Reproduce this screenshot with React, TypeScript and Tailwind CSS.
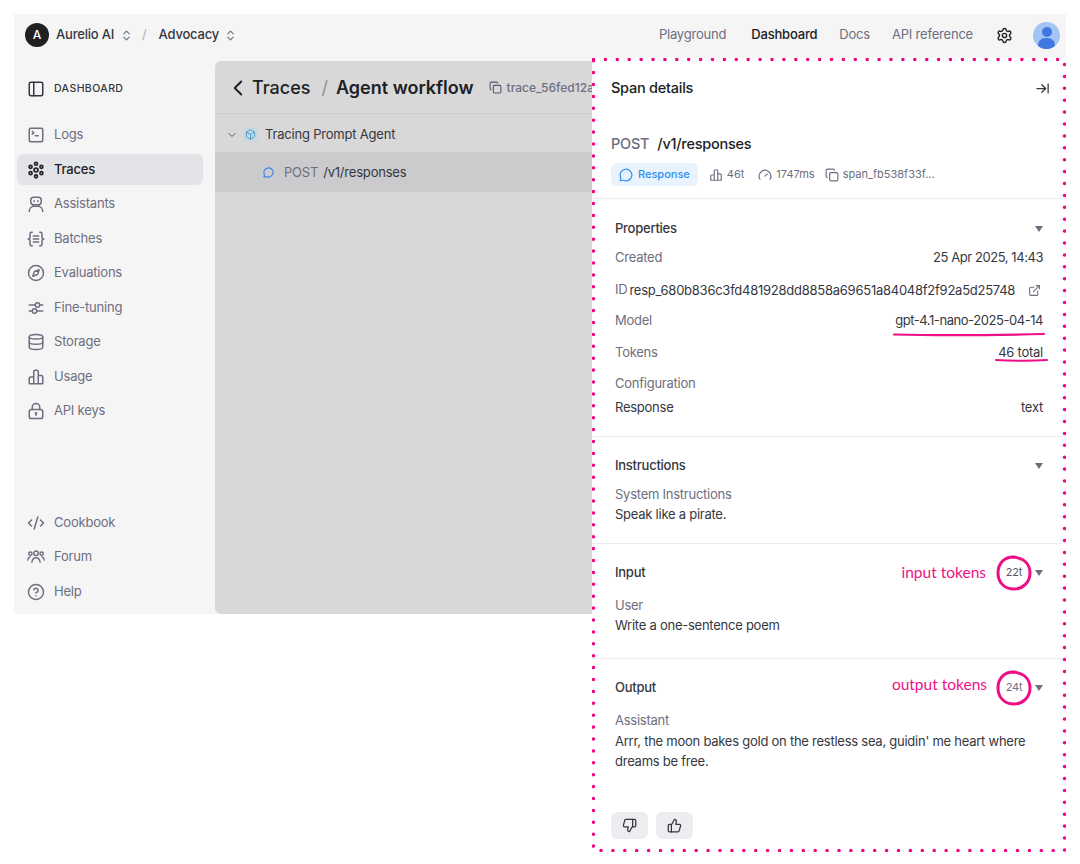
import React from "react";
import {
  ArrowRightToLine, Box, ChevronDown, ChevronLeft, ChevronsUpDown, CircleHelp, CodeXml, Compass, Copy,
  Database, ExternalLink, Gauge, MessageCircle, PanelLeft, Settings, SquareTerminal, ThumbsDown, ThumbsUp,
} from "lucide-react";

type IconProps = { className?: string };
const base = { viewBox: "0 0 24 24", fill: "none", stroke: "currentColor", strokeWidth: 2, strokeLinecap: "round" as const, strokeLinejoin: "round" as const };

const TracesIcon = ({ className }: IconProps) => (
  <svg {...base} className={className} strokeWidth={2.2}>
    <circle cx="12" cy="12" r="2.6" /><circle cx="12" cy="3.6" r="2" /><circle cx="12" cy="20.4" r="2" />
    <circle cx="4.8" cy="7.8" r="2" /><circle cx="19.2" cy="7.8" r="2" /><circle cx="4.8" cy="16.2" r="2" /><circle cx="19.2" cy="16.2" r="2" />
  </svg>
);
const BotIcon = ({ className }: IconProps) => (
  <svg {...base} className={className}>
    <rect x="5" y="3" width="14" height="10" rx="4" />
    <path d="M9.5 7.5v1M14.5 7.5v1M8 13v2M16 13v2M3 22c0-4 3-6.5 5-7h8c2 .5 5 3 5 7" />
  </svg>
);
const BracesIcon = ({ className }: IconProps) => (
  <svg {...base} className={className}>
    <path d="M7 3H6a2 2 0 0 0-2 2v4.5C4 11 3 12 1.500 12 3 12 4 13 4 14.500V19a2 2 0 0 0 2 2h1" />
    <path d="M17 3h1a2 2 0 0 1 2 2v4.500c0 1.500 1 2.500 2.500 2.500-1.500 0-2.500 1-2.500 2.500V19a2 2 0 0 1-2 2h-1" />
    <path d="M8.500 8h7M8.500 12h7M8.500 16h7" />
  </svg>
);
const TuneIcon = ({ className }: IconProps) => (
  <svg {...base} className={className}>
    <path d="M3 8h8M17 8h4M3 16h4M13 16h8" /><circle cx="14" cy="8" r="3" /><circle cx="10" cy="16" r="3" />
  </svg>
);
const BarsIcon = ({ className }: IconProps) => (
  <svg {...base} className={className}>
    <path d="M3 21v-7a2 2 0 0 1 2-2h4V5a2 2 0 0 1 2-2h2a2 2 0 0 1 2 2v5h4a2 2 0 0 1 2 2v9zM9 12v9M15 10v11" />
  </svg>
);
const LockIcon = ({ className }: IconProps) => (
  <svg {...base} className={className}>
    <rect x="3" y="10" width="18" height="12" rx="2.500" />
    <path d="M7 10V7a5 5 0 0 1 10 0v3M12 15.500v2" /><circle cx="12" cy="15" r=".8" />
  </svg>
);
const UsersIcon = ({ className }: IconProps) => (
  <svg {...base} className={className} strokeWidth={1.9}>
    <circle cx="12" cy="7" r="3" /><circle cx="4.500" cy="7.500" r="2.200" /><circle cx="19.500" cy="7.500" r="2.200" />
    <path d="M6.500 19c.5-4 2.500-6 5.500-6s5 2 5.500 6M1 16c.3-2 1.300-3.500 3-4M23 16c-.3-2-1.300-3.500-3-4" />
  </svg>
);

const NavItem = ({ icon: Icon, label, active }: { icon: React.ComponentType<IconProps>; label: string; active?: boolean }) => (
  <div className={`flex h-[31px] items-center gap-[9px] rounded-md pl-[10px] text-[13px] tracking-[-0.2px] ${active ? "bg-[#e3e4e8] font-medium text-[#202123]" : "text-[#6e6e80]"}`}>
    <Icon className="size-[18px] shrink-0" />
    <span>{label}</span>
  </div>
);

const Row = ({ label, value, strong, tight }: { label: string; value: string; strong?: boolean; tight?: boolean }) => (
  <div className="flex items-center justify-between text-[13px]">
    <span className={strong ? "text-[#353740]" : "text-[#6e6e80]"}>{label}</span>
    <span className={`text-[#353740] ${tight ? "tracking-[-0.44px]" : ""}`}>{value}</span>
  </div>
);

const Caret = ({ className = "" }: IconProps) => (
  <span className={`h-0 w-0 shrink-0 border-x-[4.500px] border-t-[6px] border-x-transparent border-t-[#6e6e80] ${className}`} />
);

const Ring = ({ className }: IconProps) => (
  <svg viewBox="0 0 36 36" className={`absolute ${className}`} fill="none" stroke="#ee0f86" strokeWidth="3">
    <path d="M19 2C9 1 2 8 2 18s7 16 16 16 16-7 16-16S28 3 17 2" />
  </svg>
);

export default function App() {
  return (
    <div className="relative h-[864px] w-[1080px] overflow-hidden bg-white pl-[14px] pt-[14px] font-['Inter',sans-serif]">
      <div className="flex h-[600px] w-[1052px] flex-col bg-[#f5f5f5]">
        <header className="flex h-[47px] shrink-0 items-center pb-[6px] pl-[11px] pr-[6px] pt-[1px] text-[13px] tracking-[-0.2px]">
          <span className="flex size-6 items-center justify-center rounded-full bg-[#202123] text-[12px] font-medium text-white">A</span>
          <span className="ml-[7px] font-medium text-[#353740]">Aurelio AI</span>
          <ChevronsUpDown className="ml-[6px] size-[13px] text-[#6e6e80]" />
          <span className="ml-[9px] text-[#acacbe]">/</span>
          <span className="ml-[12px] font-medium text-[#353740]">Advocacy</span>
          <ChevronsUpDown className="ml-[5px] size-[13px] text-[#6e6e80]" />
          <nav className="ml-auto flex items-center text-[#6e6e80]">
            <span>Playground</span>
            <span className="ml-[25px] font-medium text-[#202123]">Dashboard</span>
            <span className="ml-[22px]">Docs</span>
            <span className="ml-[22px]">API reference</span>
            <Settings className="ml-[23px] size-[17px] text-[#202123]" />
            <span className="relative ml-[20px] size-[27px] overflow-hidden rounded-full bg-[#a3c4f5]">
              <span className="absolute left-[8.500px] top-[5px] size-[10px] rounded-full bg-[#3f78de]" />
              <span className="absolute left-[5px] top-[16px] h-[14px] w-[17px] rounded-full bg-[#3f78de]" />
            </span>
          </nav>
        </header>
        <div className="flex min-h-0 flex-1">
          <aside className="flex w-[201px] shrink-0 flex-col justify-between pb-[7px] pl-[3px] pr-[12px]">
            <div>
              <div className="flex h-[56px] items-center gap-[9px] pl-[10px] text-[10.500px] font-medium uppercase tracking-[0.04em] text-[#353740]">
                <PanelLeft className="size-[18px] text-[#353740]" />
                <span>Dashboard</span>
              </div>
              <div className="mt-[2.500px] flex flex-col gap-[3.500px]">
                <NavItem icon={SquareTerminal} label="Logs" />
                <NavItem icon={TracesIcon} label="Traces" active />
                <NavItem icon={BotIcon} label="Assistants" />
                <NavItem icon={BracesIcon} label="Batches" />
                <NavItem icon={Compass} label="Evaluations" />
                <NavItem icon={TuneIcon} label="Fine-tuning" />
                <NavItem icon={Database} label="Storage" />
                <NavItem icon={BarsIcon} label="Usage" />
                <NavItem icon={LockIcon} label="API keys" />
              </div>
            </div>
            <div className="flex flex-col gap-[3.500px]">
              <NavItem icon={CodeXml} label="Cookbook" />
              <NavItem icon={UsersIcon} label="Forum" />
              <NavItem icon={CircleHelp} label="Help" />
            </div>
          </aside>
          <main className="min-w-0 flex-1 rounded-l-[6px] bg-[#d8d8d8]">
            <div className="flex h-[53px] items-center border-b border-[#cfcfcf] pl-[10px] pt-[1px] text-[#202123]">
              <ChevronLeft className="size-[26px]" strokeWidth={1.800} />
              <span className="ml-[1px] text-[18px] font-medium">Traces</span>
              <span className="ml-[11px] text-[18px] text-[#8e8ea0]">/</span>
              <span className="ml-[8px] text-[18px] font-semibold">Agent workflow</span>
              <Copy className="ml-[15px] size-[13px] text-[#565869]" />
              <span className="ml-[5px] whitespace-nowrap text-[12px] font-medium text-[#6e6e80]">trace_56fed12a</span>
            </div>
            <div className="flex h-[38px] items-center pl-[11px] pt-[3px] text-[13px] tracking-[-0.2px] text-[#353740]">
              <ChevronDown className="size-[12px] text-[#565869]" />
              <span className="ml-[5px] flex size-[15px] items-center justify-center rounded-[4px] bg-[#c8d8e0]">
                <Box className="size-[11px] text-[#3c9bc8]" />
              </span>
              <span className="ml-[7px]">Tracing Prompt Agent</span>
            </div>
            <div className="flex h-[40px] items-center bg-[#cbcbcd] pl-[48px] pt-[1px] text-[13px] tracking-[-0.2px] text-[#353740]">
              <MessageCircle className="size-[11px] text-[#3b82e6]" strokeWidth={2.400} />
              <span className="ml-[10px] text-[#6e6e80]">POST</span>
              <span className="ml-[5px]">/v1/responses</span>
            </div>
          </main>
        </div>
      </div>

      <section className="absolute left-[592px] top-[58px] flex h-[794px] w-[474px] flex-col bg-white tracking-[-0.25px]">
        <svg className="absolute inset-0 size-full" fill="none">
          <rect x="1.500" y="1.500" width="471" height="791" stroke="#f0047f" strokeWidth="3.500" strokeLinecap="round" strokeDasharray="0 11.900" />
        </svg>
        <div className="flex h-[60px] shrink-0 items-center justify-between pl-[19px] pr-[16px]">
          <span className="text-[14.500px] font-medium text-[#202123]">Span details</span>
          <ArrowRightToLine className="size-[15px] text-[#353740]" />
        </div>
        <div className="h-[81px] shrink-0 border-b border-[#ececf1] pl-[19px] pt-[16px]">
          <div className="text-[14.500px] font-medium leading-[20px] text-[#202123]">
            <span className="text-[#6e6e80]">POST</span>
            <span className="ml-[8px]">/v1/responses</span>
          </div>
          <div className="mt-[9px] flex items-center text-[11px] tracking-normal text-[#6e6e80]">
            <span className="flex h-[23px] items-center gap-[5px] rounded-[6px] bg-[#e8f3fd] px-[8px] font-medium text-[#2b8ff0]">
              <MessageCircle className="size-[14px]" />Response
            </span>
            <BarsIcon className="ml-[11px] size-[14px]" />
            <span className="ml-[4px]">46t</span>
            <Gauge className="ml-[14px] size-[14px]" />
            <span className="ml-[4px]">1747ms</span>
            <Copy className="ml-[10px] size-[14px]" />
            <span className="ml-[4px]">span_fb538f33f...</span>
          </div>
        </div>
        <div className="h-[238px] shrink-0 border-b border-[#ececf1] px-[23px] pt-[20px]">
          <div className="flex items-center justify-between text-[13px] font-medium text-[#353740]">Properties<Caret /></div>
          <div className="mt-[9px]"><Row label="Created" value="25 Apr 2025, 14:43" tight /></div>
          <div className="mt-[14px] flex items-center text-[13px] text-[#353740]">
            <span className="-translate-y-[1px] text-[#6e6e80]">ID</span>
            <span className="ml-[2px]">resp_680b836c3fd481928dd8858a69651a84048f2f92a5d25748</span>
            <ExternalLink className="ml-auto mr-[2px] size-[13px] text-[#6e6e80]" />
          </div>
          <div className="mt-[10px]"><Row label="Model" value="gpt-4.1-nano-2025-04-14" tight /></div>
          <div className="mt-[13px]"><Row label="Tokens" value="46 total" /></div>
          <div className="mt-[11px] text-[13px] text-[#6e6e80]">Configuration</div>
          <div className="mt-[5px]"><Row label="Response" value="text" strong /></div>
        </div>
        <div className="h-[107px] shrink-0 border-b border-[#ececf1] px-[23px] pt-[19px] text-[13px]">
          <div className="flex items-center justify-between font-medium text-[#353740]">Instructions<Caret /></div>
          <div className="mt-[9px] text-[#6e6e80]">System Instructions</div>
          <div className="mt-[1px] text-[#353740]">Speak like a pirate.</div>
        </div>
        <div className="h-[115px] shrink-0 border-b border-[#ececf1] px-[23px] pt-[17px] text-[13px]">
          <div className="flex items-center font-medium text-[#353740]">
            <span>Input</span>
            <span className="ml-auto font-['Lato',sans-serif] text-[15.500px] font-normal tracking-normal text-[#ee0f86]">input tokens</span>
            <span className="relative ml-[18px] flex size-[20px] items-center justify-center text-[11px] font-normal text-[#565869]">
              22t
              <Ring className="-left-[8px] -top-[8px] size-[36px]" />
            </span>
            <Caret className="ml-[11px]" />
          </div>
          <div className="mt-[12px] text-[#6e6e80]">User</div>
          <div className="text-[#353740]">Write a one-sentence poem</div>
        </div>
        <div className="flex-1 px-[23px] pt-[17px] text-[13px]">
          <div className="flex items-center font-medium text-[#353740]">
            <span>Output</span>
            <span className="ml-auto -translate-y-[3px] font-['Lato',sans-serif] text-[15.500px] font-normal tracking-normal text-[#ee0f86]">output tokens</span>
            <span className="relative ml-[17px] flex size-[20px] items-center justify-center text-[11px] font-normal text-[#6e6e80]">
              24t
              <Ring className="-left-[8px] -top-[8px] size-[36px]" />
            </span>
            <Caret className="ml-[11px]" />
          </div>
          <div className="mt-[12px] text-[#6e6e80]">Assistant</div>
          <div className="leading-[20px] text-[#353740]">Arrr, the moon bakes gold on the restless sea, guidin' me heart where dreams be free.</div>
          <div className="-ml-[4px] mt-[41px] flex gap-[8px]">
            <span className="flex h-[27px] w-[37px] items-center justify-center rounded-[6px] bg-[#ececf1] text-[#353740]"><ThumbsDown className="size-[15px]" /></span>
            <span className="flex h-[27px] w-[37px] items-center justify-center rounded-[6px] bg-[#ececf1] text-[#353740]"><ThumbsUp className="size-[15px]" /></span>
          </div>
        </div>
        <svg className="absolute left-0 top-0 size-full" fill="none" stroke="#ee0f86" strokeLinecap="round">
          <path d="M302 276.500C360 278 410 277 452 276" strokeWidth="2.200" />
          <path d="M404 302C425 303 440 303 455 302" strokeWidth="2" />
        </svg>
      </section>
    </div>
  );
}
